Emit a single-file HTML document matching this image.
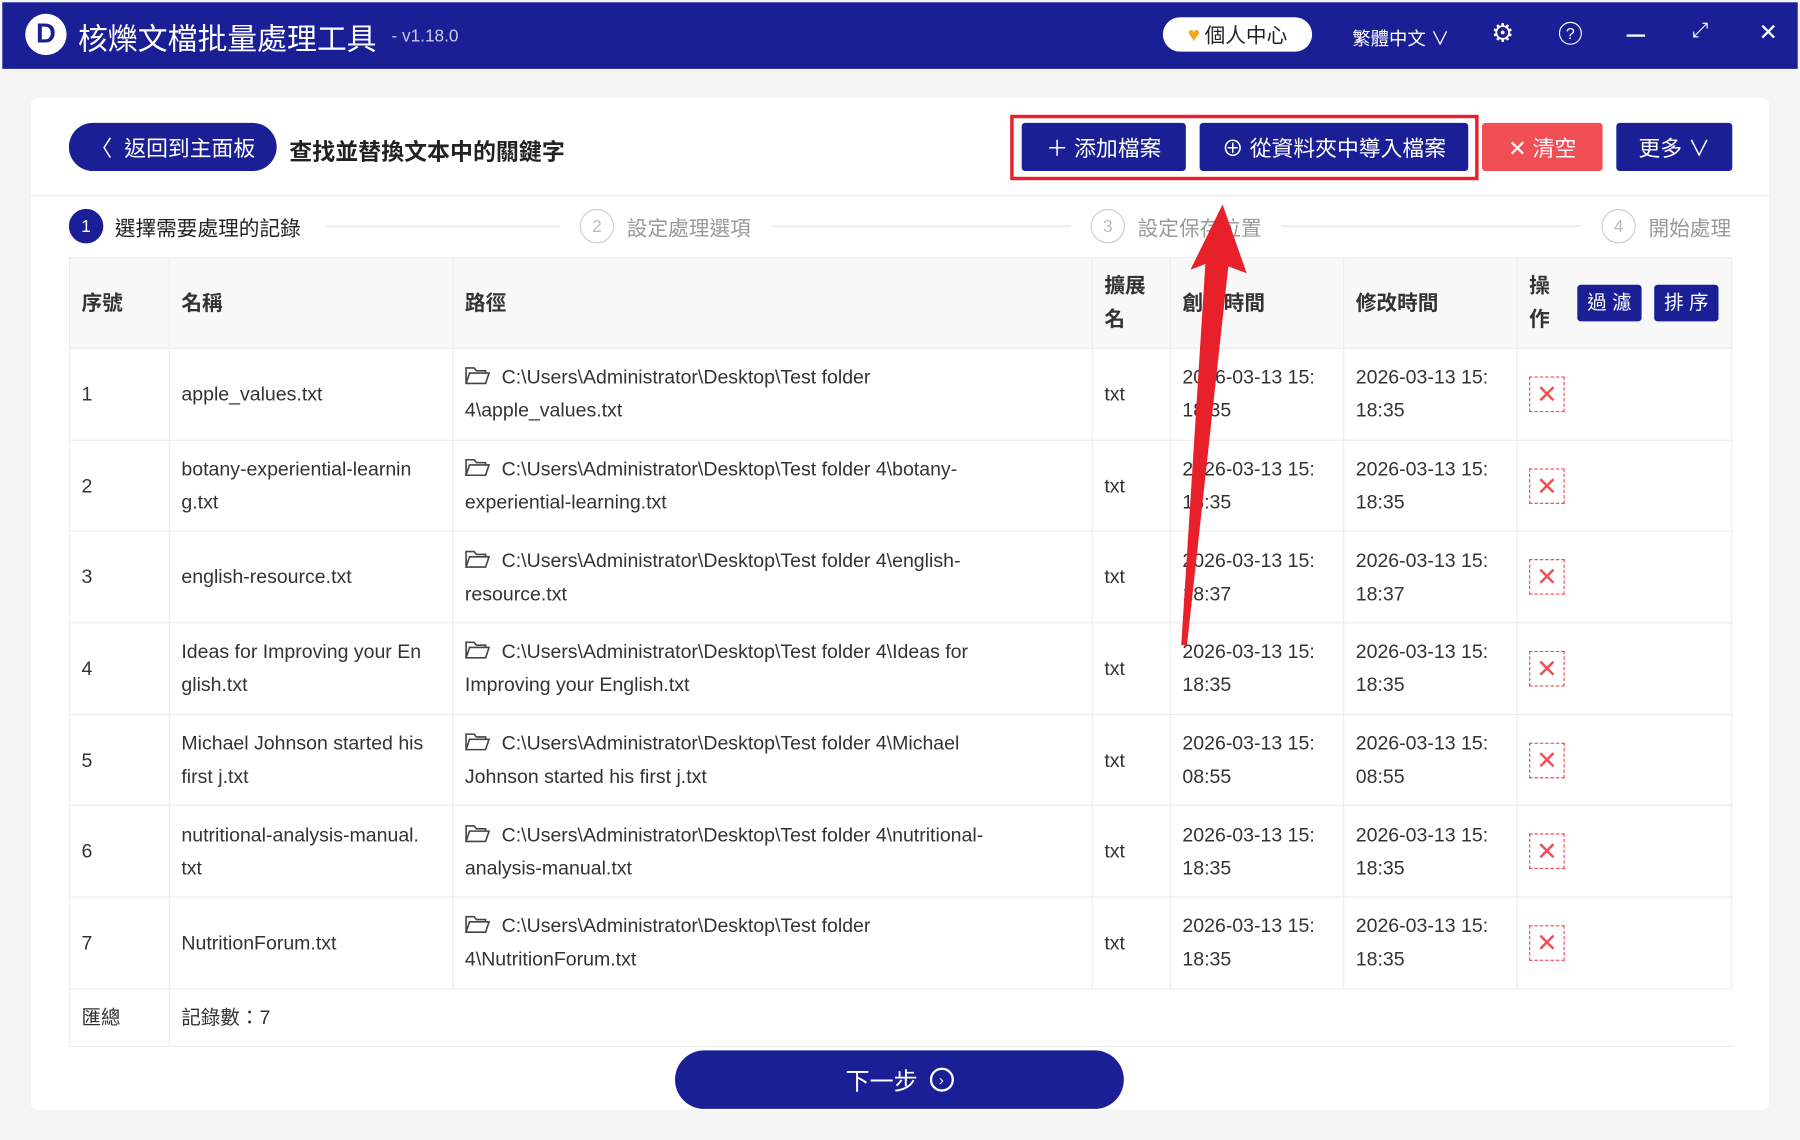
<!DOCTYPE html>
<html><head><meta charset="utf-8">
<style>
*{box-sizing:border-box;margin:0;padding:0}
html,body{width:1800px;height:1140px;overflow:hidden;background:#e6e6e6}
#w{position:absolute;left:0;top:0;width:1568px;height:993px;transform:scale(1.14796);transform-origin:0 0;font-family:"Liberation Sans","Noto Sans CJK TC",sans-serif;color:#333;background:#f4f4f5}
.a{position:absolute}
.tb{left:2px;top:2px;width:1564px;height:58px;background:#1a1f96;color:#fff}
.btn{position:absolute;background:#1a1f96;color:#fff;font-size:19px;display:flex;align-items:center;justify-content:center;border-radius:3px}
.card{left:27px;top:85px;width:1514px;height:882px;background:#fff;border-radius:6px}
.circ{position:absolute;width:30px;height:30px;border-radius:50%;border:1px solid #ccc;color:#bbb;font-size:15px;display:flex;align-items:center;justify-content:center}
.st{position:absolute;font-size:18px;color:#999;top:185px}
.ln{position:absolute;height:2px;background:#eee;top:196px}
table{position:absolute;left:60px;top:224px;width:1449px;border-collapse:collapse;font-size:17px}
td,th{border:1px solid #ececec;padding:0 10px;line-height:29px;text-align:left;vertical-align:middle}
th{background:#f8f8f9;height:79px;font-weight:bold;font-size:18px}
tr.r td{height:79.7px}
tr.s td{height:50px}
.x{width:31px;height:31px;border:1px dashed #f24e55;color:#f24e55;display:flex;align-items:center;justify-content:center;font-size:22px}
.fi{display:inline-block;width:22px;height:16px;margin-right:10px;vertical-align:-1px}
.sb{display:inline-block;background:#1a1f96;color:#fff;font-size:17px;width:56px;text-align:center;line-height:32px;border-radius:3px;font-weight:normal}
</style></head><body><div id="w">
<div class="a tb">
 <div class="a" style="left:20px;top:10px;width:36px;height:36px;border-radius:50%;background:#fff;color:#1a1f96;font-weight:bold;font-size:24px;display:flex;align-items:center;justify-content:center">D</div>
 <div class="a" style="left:66px;top:12px;font-size:26px">核爍文檔批量處理工具</div>
 <div class="a" style="left:339px;top:21px;font-size:15px;color:#c8cbe8">- v1.18.0</div>
 <div class="a" style="left:1011px;top:13px;width:130px;height:30px;background:#fff;border-radius:15px;color:#222;font-size:18px;display:flex;align-items:center;justify-content:center"><span style="color:#f5a623;margin-right:4px">♥</span>個人中心</div>
 <div class="a" style="left:1176px;top:18px;font-size:16px">繁體中文 ∨</div>
 <div class="a" style="left:1297px;top:14px;font-size:22px">⚙</div>
 <div class="a" style="left:1356px;top:17px;width:20px;height:20px;border:1.5px solid #fff;border-radius:50%;font-size:14px;text-align:center;line-height:18px">?</div>
 <div class="a" style="left:1415px;top:28px;width:16px;height:2px;background:#fff"></div>
 <div class="a" style="left:1472px;top:14px;font-size:18px">⤢</div>
 <div class="a" style="left:1530px;top:14px;font-size:20px">✕</div>
</div>
<div class="a card"></div>
<div class="a" style="left:27px;top:170px;width:1514px;height:1px;background:#eee"></div>
<div class="btn" style="left:60px;top:107px;width:181px;height:42px;border-radius:21px">〈&nbsp; 返回到主面板</div>
<div class="a" style="left:252px;top:116px;font-size:20px;font-weight:bold;color:#222">查找並替換文本中的關鍵字</div>
<div class="a" style="left:880px;top:100px;width:408px;height:57px;border:3px solid #e8202a"></div>
<div class="btn" style="left:890px;top:107px;width:143px;height:42px">＋ 添加檔案</div>
<div class="btn" style="left:1045px;top:107px;width:234px;height:42px">⊕ 從資料夾中導入檔案</div>
<div class="btn" style="left:1291px;top:107px;width:105px;height:42px;background:#f24e55">✕ 清空</div>
<div class="btn" style="left:1408px;top:107px;width:101px;height:42px">更多 ∨</div>
<div class="circ" style="left:60px;top:182px;background:#1a1f96;border-color:#1a1f96;color:#fff">1</div>
<div class="st" style="left:100px;color:#222">選擇需要處理的記錄</div>
<div class="ln" style="left:283px;width:205px"></div>
<div class="circ" style="left:505px;top:182px">2</div>
<div class="st" style="left:546px">設定處理選項</div>
<div class="ln" style="left:672px;width:261px"></div>
<div class="circ" style="left:950px;top:182px">3</div>
<div class="st" style="left:991px">設定保存位置</div>
<div class="ln" style="left:1116px;width:262px"></div>
<div class="circ" style="left:1395px;top:182px">4</div>
<div class="st" style="left:1436px">開始處理</div>
<table>
<colgroup><col style="width:87px"><col style="width:247px"><col style="width:557px"><col style="width:68px"><col style="width:151px"><col style="width:151px"><col></colgroup>
<tr><th>序號</th><th>名稱</th><th>路徑</th><th>擴展<br>名</th><th>創建時間</th><th>修改時間</th><th><div style="display:flex;align-items:center"><span>操<br>作</span><span style="margin-left:24px" class="sb">過 濾</span><span class="sb" style="margin-left:11px">排 序</span></div></th></tr>
<tr class="r"><td>1</td><td>apple_values.txt</td><td><svg class="fi" viewBox="0 0 22 16"><path d="M1 15V1.5h7l2 2.5h8V6M1 15l3-9h17l-3 9z" fill="none" stroke="#444" stroke-width="1.4"/></svg>C:\Users\Administrator\Desktop\Test folder<br>4\apple_values.txt</td><td>txt</td><td>2026-03-13 15:<br>18:35</td><td>2026-03-13 15:<br>18:35</td><td><div class="x">✕</div></td></tr>
<tr class="r"><td>2</td><td>botany-experiential-learnin<br>g.txt</td><td><svg class="fi" viewBox="0 0 22 16"><path d="M1 15V1.5h7l2 2.5h8V6M1 15l3-9h17l-3 9z" fill="none" stroke="#444" stroke-width="1.4"/></svg>C:\Users\Administrator\Desktop\Test folder 4\botany-<br>experiential-learning.txt</td><td>txt</td><td>2026-03-13 15:<br>18:35</td><td>2026-03-13 15:<br>18:35</td><td><div class="x">✕</div></td></tr>
<tr class="r"><td>3</td><td>english-resource.txt</td><td><svg class="fi" viewBox="0 0 22 16"><path d="M1 15V1.5h7l2 2.5h8V6M1 15l3-9h17l-3 9z" fill="none" stroke="#444" stroke-width="1.4"/></svg>C:\Users\Administrator\Desktop\Test folder 4\english-<br>resource.txt</td><td>txt</td><td>2026-03-13 15:<br>18:37</td><td>2026-03-13 15:<br>18:37</td><td><div class="x">✕</div></td></tr>
<tr class="r"><td>4</td><td>Ideas for Improving your En<br>glish.txt</td><td><svg class="fi" viewBox="0 0 22 16"><path d="M1 15V1.5h7l2 2.5h8V6M1 15l3-9h17l-3 9z" fill="none" stroke="#444" stroke-width="1.4"/></svg>C:\Users\Administrator\Desktop\Test folder 4\Ideas for<br>Improving your English.txt</td><td>txt</td><td>2026-03-13 15:<br>18:35</td><td>2026-03-13 15:<br>18:35</td><td><div class="x">✕</div></td></tr>
<tr class="r"><td>5</td><td>Michael Johnson started his<br>first j.txt</td><td><svg class="fi" viewBox="0 0 22 16"><path d="M1 15V1.5h7l2 2.5h8V6M1 15l3-9h17l-3 9z" fill="none" stroke="#444" stroke-width="1.4"/></svg>C:\Users\Administrator\Desktop\Test folder 4\Michael<br>Johnson started his first j.txt</td><td>txt</td><td>2026-03-13 15:<br>08:55</td><td>2026-03-13 15:<br>08:55</td><td><div class="x">✕</div></td></tr>
<tr class="r"><td>6</td><td>nutritional-analysis-manual.<br>txt</td><td><svg class="fi" viewBox="0 0 22 16"><path d="M1 15V1.5h7l2 2.5h8V6M1 15l3-9h17l-3 9z" fill="none" stroke="#444" stroke-width="1.4"/></svg>C:\Users\Administrator\Desktop\Test folder 4\nutritional-<br>analysis-manual.txt</td><td>txt</td><td>2026-03-13 15:<br>18:35</td><td>2026-03-13 15:<br>18:35</td><td><div class="x">✕</div></td></tr>
<tr class="r"><td>7</td><td>NutritionForum.txt</td><td><svg class="fi" viewBox="0 0 22 16"><path d="M1 15V1.5h7l2 2.5h8V6M1 15l3-9h17l-3 9z" fill="none" stroke="#444" stroke-width="1.4"/></svg>C:\Users\Administrator\Desktop\Test folder<br>4\NutritionForum.txt</td><td>txt</td><td>2026-03-13 15:<br>18:35</td><td>2026-03-13 15:<br>18:35</td><td><div class="x">✕</div></td></tr>
<tr class="s"><td>匯總</td><td colspan="6" style="border-right:none">記錄數：7</td></tr>
</table>
<div class="btn" style="left:588px;top:915px;width:391px;height:51px;border-radius:26px;font-size:21px">下一步 <span style="display:inline-block;width:21px;height:21px;border:2px solid #fff;border-radius:50%;font-size:13px;line-height:17px;text-align:center;margin-left:10px">›</span></div>
<svg class="a" style="left:0;top:0" width="1568" height="993"><polygon points="1065,178 1086,238 1070,232 1034,562 1029,562 1050,230 1037,235" fill="#e8202a"/></svg>
</div></body></html>
